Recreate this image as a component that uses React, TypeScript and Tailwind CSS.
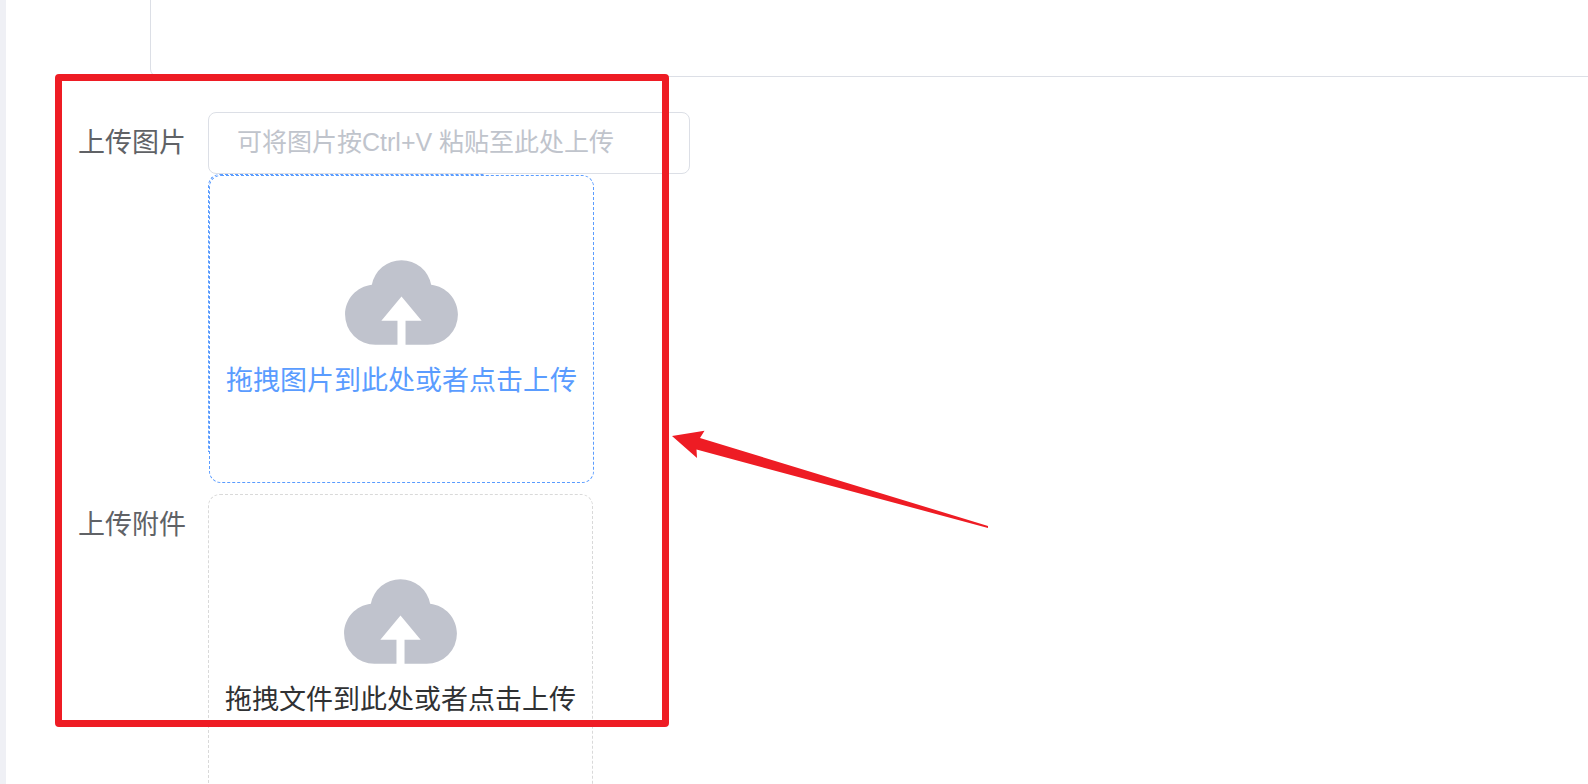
import type { ReactNode } from "react";

function CloudUploadIcon() {
  return (
    <svg viewBox="0 0 1024 1024" className="size-[129px] fill-[#c0c3cd]" aria-hidden="true">
      <path d="M544 864V672h128L512 480 352 672h128v192H320v-1.6c-5.376.32-10.496 1.6-16 1.6A240 240 0 0 1 64 624c0-123.136 93.12-223.488 212.608-237.248A239.808 239.808 0 0 1 512 192a239.872 239.872 0 0 1 235.456 194.752c119.488 13.76 212.48 114.112 212.48 237.248a240 240 0 0 1-240 240c-5.376 0-10.56-1.28-16-1.6v1.6H544z" />
    </svg>
  );
}

function FormRow({ label, htmlFor, children }: { label: string; htmlFor: string; children: ReactNode }) {
  return (
    <div className="flex items-start gap-[22px]">
      <label htmlFor={htmlFor} className="shrink-0 text-[27px] leading-[62px] text-[#606266]">
        {label}
      </label>
      <div className="min-w-0">{children}</div>
    </div>
  );
}

function Dragger({ id, text, active = false }: { id: string; text: string; active?: boolean }) {
  return (
    <label
      htmlFor={id}
      className={`relative flex h-[308px] w-[385px] cursor-pointer flex-col items-center rounded-xl border border-dashed pt-[60px] text-[27px] leading-8 whitespace-nowrap ${
        active ? "mt-px ml-px border-[#5a9cff] text-[#5a9cff]" : "border-[#d9d9d9] text-[#303133]"
      }`}
    >
      {/* focus ring peeking out on the top left */}
      {active && (
        <span className="absolute -top-0.5 -left-0.5 h-[278px] w-[276px] rounded-tl-xl border-t border-l border-dashed border-[#5a9cff]" />
      )}
      <CloudUploadIcon />
      <span>{text}</span>
      <input id={id} type="file" className="sr-only" />
    </label>
  );
}

function Annotation() {
  return (
    <>
      <div className="pointer-events-none absolute top-[74px] left-[55px] h-[653px] w-[614px] rounded-sm border-7 border-[#ee1c24]" />
      <svg
        viewBox="672 430 318 100"
        className="pointer-events-none absolute top-[430px] left-[672px] h-[100px] w-[318px] fill-[#ee1c24]"
        aria-hidden="true"
      >
        <path d="M672 436L704.5 430.8L700 438L988 526V528L696.500 449.500L697 458Z" />
      </svg>
    </>
  );
}

export default function App() {
  return (
    <div className="relative flex h-screen overflow-hidden bg-white font-['Liberation_Sans','Noto_Sans_CJK_SC',sans-serif]">
      <aside className="w-1.5 shrink-0 bg-[#eff0f5]" />
      <main className="min-w-0 flex-1">
        <div className="flex pl-36">
          <textarea
            aria-label="内容"
            className="h-[77px] flex-1 resize-none rounded-bl-lg border-b border-l border-[#dcdfe6] outline-none"
          />
        </div>
        <form className="flex flex-col gap-[11px] pt-[35px] pl-[72px]">
          <FormRow label="上传图片" htmlFor="paste">
            <input
              id="paste"
              type="text"
              placeholder="可将图片按Ctrl+V 粘贴至此处上传"
              className="block h-[62px] w-[482px] rounded-lg border border-[#dcdfe6] px-7 pb-0.5 text-[25px] outline-none placeholder:text-[#c0c4cc]"
            />
            <Dragger id="image" text="拖拽图片到此处或者点击上传" active />
          </FormRow>
          <FormRow label="上传附件" htmlFor="file">
            <Dragger id="file" text="拖拽文件到此处或者点击上传" />
          </FormRow>
        </form>
      </main>
      <Annotation />
    </div>
  );
}
